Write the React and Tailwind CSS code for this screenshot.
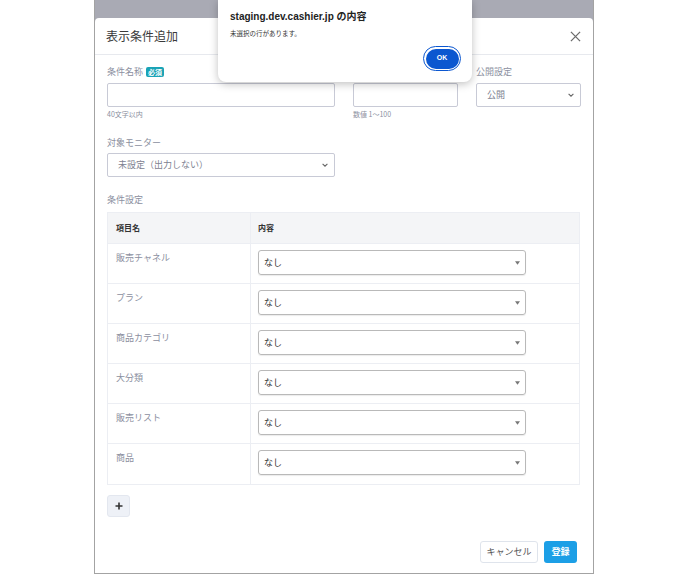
const rows = ['販売チャネル', 'プラン', '商品カテゴリ', '大分類', '販売リスト', '商品'];

const Chevron = () => (
  <svg width="8" height="8" viewBox="0 0 10 10" className="text-[#666]">
    <path d="M2 3.5 L5 6.5 L8 3.5" fill="none" stroke="currentColor" strokeWidth="1.4" />
  </svg>
);

const App = () => {
  return (
    <div className="min-h-[574px] bg-white" style={{ fontFamily: '"Noto Sans CJK JP", "Noto Sans", sans-serif' }}>
      <div className="relative w-[500px] h-[574px] mx-auto border-x border-b border-[#a3a3a3] bg-[#a9aab4] pt-[18px] flex flex-col">
        <div className="flex-1 bg-white rounded-t-[4px] flex flex-col">
          <div className="h-[37px] pl-[11px] pr-[12px] flex items-center justify-between border-b border-[#e7e9ee]">
            <h2 className="text-[12px] text-[#3a3a3a] leading-none">表示条件追加</h2>
            <svg width="11" height="11" viewBox="0 0 12 12">
              <path d="M1 1 L11 11 M11 1 L1 11" stroke="#6b6b6b" strokeWidth="1.4" />
            </svg>
          </div>

          <div className="px-[12px] pt-[11px] flex flex-col flex-1 pb-[10px]">
            <div className="flex gap-[18px]">
              <div className="w-[228px]">
                <div className="flex items-center gap-[3px] h-[12px] mb-[5px]">
                  <span className="text-[9px] leading-[12px] text-[#8b8fa0]">条件名称</span>
                  <span className="bg-[#19a3b6] text-white text-[7px] font-bold leading-[10px] px-[2px] rounded-[2px]">必須</span>
                </div>
                <div className="h-[24px] border border-[#c8cad6] rounded-[2px]"></div>
                <p className="mt-[3px] text-[7px] leading-[9px] text-[#8b8fa0]">40文字以内</p>
              </div>
              <div className="w-[105px]">
                <div className="h-[12px] mb-[5px] text-[9px] leading-[12px] text-[#8b8fa0]">閲覧順</div>
                <div className="h-[24px] border border-[#c8cad6] rounded-[2px]"></div>
                <p className="mt-[3px] text-[7px] leading-[9px] text-[#8b8fa0]">数値 1〜100</p>
              </div>
              <div className="w-[105px]">
                <div className="h-[12px] mb-[5px] text-[9px] leading-[12px] text-[#8b8fa0]">公開設定</div>
                <div className="h-[24px] border border-[#c8cad6] rounded-[2px] flex items-center justify-between pl-[10px] pr-[5px]">
                  <span className="text-[9px] text-[#7d8190]">公開</span>
                  <Chevron />
                </div>
              </div>
            </div>

            <div className="mt-[18px] w-[228px]">
              <div className="h-[12px] mb-[4px] text-[9px] leading-[12px] text-[#8b8fa0]">対象モニター</div>
              <div className="h-[24px] border border-[#c8cad6] rounded-[2px] flex items-center justify-between pl-[10px] pr-[5px]">
                <span className="text-[9px] text-[#7d8190]">未設定（出力しない）</span>
                <Chevron />
              </div>
            </div>

            <div className="mt-[17px] h-[12px] mb-[6px] text-[9px] leading-[12px] text-[#8b8fa0]">条件設定</div>

            <div className="w-[473px] border border-[#eceef3]">
              <div className="flex h-[31px] bg-[#f4f5f7] border-b border-[#eceef3]">
                <div className="w-[143px] border-r border-[#eceef3] pl-[8px] flex items-center text-[8px] font-bold text-[#333]">項目名</div>
                <div className="flex-1 pl-[7px] flex items-center text-[8px] font-bold text-[#333]">内容</div>
              </div>
              {rows.map((r, i) => (
                <div key={r} className={`flex h-[40px] ${i < rows.length - 1 ? 'border-b border-[#eceef3]' : ''}`}>
                  <div className="w-[143px] border-r border-[#eceef3] pl-[8px] pt-[8px] text-[9px] leading-[12px] text-[#8b8fa0]">{r}</div>
                  <div className="flex-1 pl-[7px] pt-[6px]">
                    <div className="w-[268px] h-[25px] border border-[#b9b9b9] rounded-[3px] shadow-[0_1px_1px_rgba(0,0,0,0.08)] flex items-center justify-between pl-[5px] pr-[5px]">
                      <span className="text-[9px] text-[#333]">なし</span>
                      <svg width="5" height="4" viewBox="0 0 6 4">
                        <path d="M0 0 L6 0 L3 4 Z" fill="#777" />
                      </svg>
                    </div>
                  </div>
                </div>
              ))}
            </div>

            <div className="mt-[10px]">
              <button className="w-[23px] h-[22px] bg-[#eef1f7] border border-[#e3e7ef] rounded-[3px] flex items-center justify-center">
                <svg width="8" height="8" viewBox="0 0 8 8">
                  <path d="M4 0.5 V7.5 M0.5 4 H7.5" stroke="#333" strokeWidth="1.6" />
                </svg>
              </button>
            </div>

            <div className="mt-auto flex justify-end gap-[6px] pr-[4px]">
              <button className="w-[58px] h-[22px] border border-[#dfe4ec] rounded-[3px] bg-white text-[9px] text-[#555]">キャンセル</button>
              <button className="w-[33px] h-[22px] rounded-[3px] bg-[#1c9fe6] text-[9px] font-bold text-white">登録</button>
            </div>
          </div>
        </div>

        <div className="absolute left-[123px] top-0 w-[254px] h-[82px] bg-white rounded-b-[8px] shadow-[0_2px_8px_rgba(0,0,0,0.25)] px-[12px] pt-[10px]" style={{ fontFamily: '"Liberation Sans", "Noto Sans CJK JP", sans-serif' }}>
          <p className="text-[10px] font-bold text-[#222] leading-[14px]">staging.dev.cashier.jp の内容</p>
          <p className="mt-[5px] text-[6.5px] text-[#333] leading-[10px]">未選択の行があります。</p>
          <div className="flex justify-end mt-[7px] mr-[-1px]">
            <div className="rounded-full border-[1.5px] border-[#0b57d0] p-[1.5px]">
              <div className="w-[33px] h-[20px] rounded-full bg-[#0b57d0] flex items-center justify-center text-[7px] font-bold text-white">OK</div>
            </div>
          </div>
        </div>
      </div>
    </div>
  );
};

export default App;
